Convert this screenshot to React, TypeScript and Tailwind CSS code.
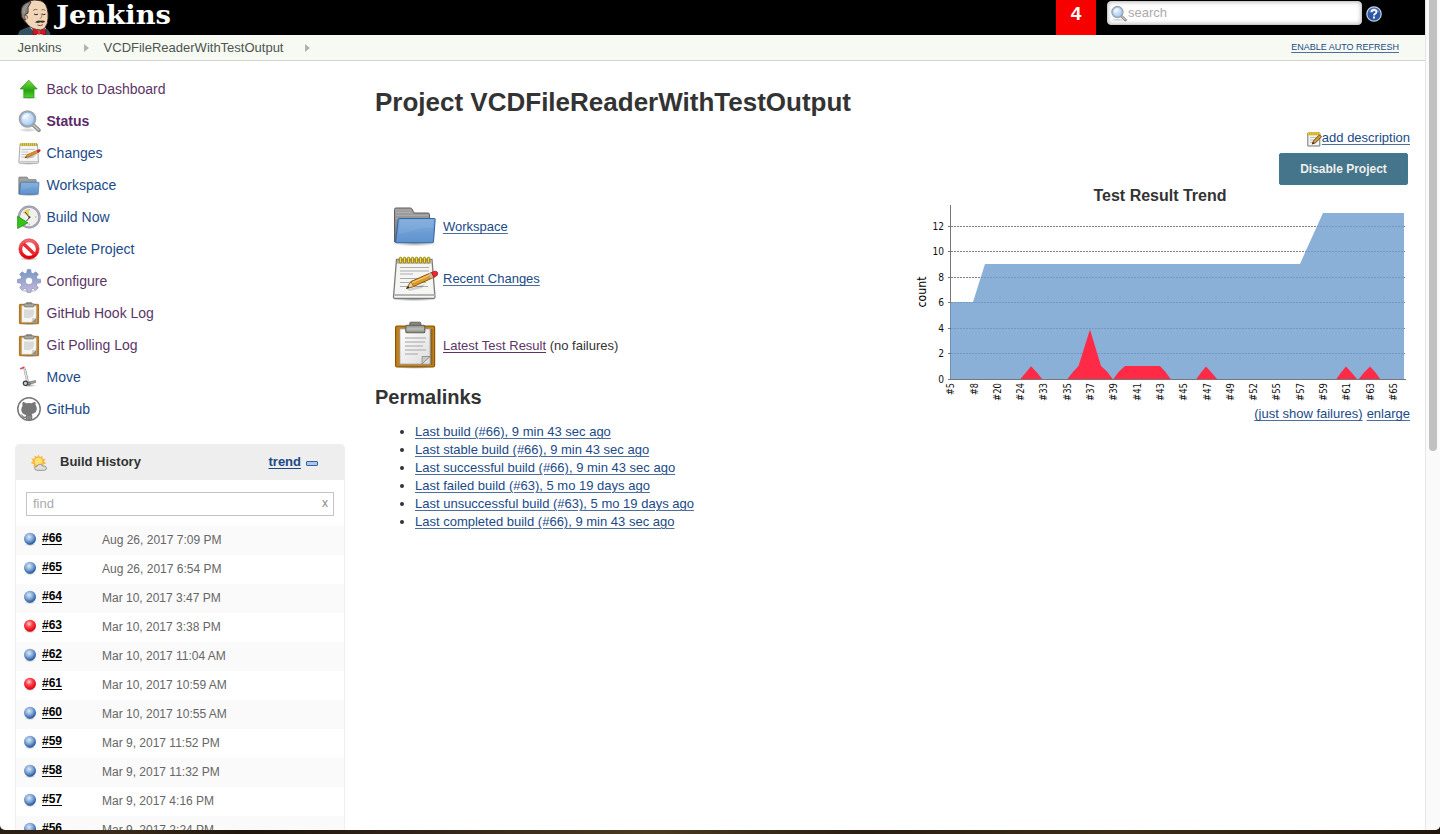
import type { ReactNode } from "react";

type IconProps = { size?: number };

function Defs() {
  return (
    <svg width="0" height="0" className="absolute" aria-hidden="true">
      <defs>
        <linearGradient id="green" x1="0" y1="0" x2="0" y2="1">
          <stop offset="0" stopColor="#7be04a" />
          <stop offset="0.6" stopColor="#27a312" />
          <stop offset="1" stopColor="#4fd42c" />
        </linearGradient>
        <radialGradient id="lens" cx="0.4" cy="0.35" r="0.7">
          <stop offset="0" stopColor="#eef6fe" />
          <stop offset="1" stopColor="#9cc2ea" />
        </radialGradient>
        <linearGradient id="folderFront" x1="0" y1="0" x2="0" y2="1">
          <stop offset="0" stopColor="#7dabdb" />
          <stop offset="1" stopColor="#5f93cf" />
        </linearGradient>
        <linearGradient id="folderBack" x1="0" y1="0" x2="0" y2="1">
          <stop offset="0" stopColor="#a5a5a5" />
          <stop offset="1" stopColor="#707070" />
        </linearGradient>
        <linearGradient id="paper" x1="0" y1="0" x2="1" y2="1">
          <stop offset="0" stopColor="#ffffff" />
          <stop offset="1" stopColor="#dcdcdc" />
        </linearGradient>
        <linearGradient id="clip" x1="0" y1="0" x2="0" y2="1">
          <stop offset="0" stopColor="#8d8f88" />
          <stop offset="0.5" stopColor="#bcbeb6" />
          <stop offset="1" stopColor="#84867e" />
        </linearGradient>
        <linearGradient id="gear" x1="0" y1="0" x2="0" y2="1">
          <stop offset="0" stopColor="#7596c6" />
          <stop offset="0.5" stopColor="#9ea6cf" />
          <stop offset="1" stopColor="#c6bbdf" />
        </linearGradient>
        <linearGradient id="red" x1="0" y1="0" x2="0" y2="1">
          <stop offset="0" stopColor="#f4646c" />
          <stop offset="1" stopColor="#e40008" />
        </linearGradient>
        <radialGradient id="ballBlue" cx="0.42" cy="0.36" r="0.62">
          <stop offset="0" stopColor="#dfeaf5" />
          <stop offset="0.5" stopColor="#86abd8" />
          <stop offset="1" stopColor="#2558a2" />
        </radialGradient>
        <radialGradient id="ballRed" cx="0.42" cy="0.34" r="0.62">
          <stop offset="0" stopColor="#ffd0d2" />
          <stop offset="0.45" stopColor="#fa4550" />
          <stop offset="1" stopColor="#e4000e" />
        </radialGradient>
        <radialGradient id="shadow">
          <stop offset="0" stopColor="#000" stopOpacity="0.35" />
          <stop offset="1" stopColor="#000" stopOpacity="0" />
        </radialGradient>
      </defs>
    </svg>
  );
}

function ArrowUp() {
  return (
    <svg width="24" height="24" viewBox="0 0 24 24">
      <ellipse cx="12" cy="20.8" rx="9" ry="1.8" fill="url(#shadow)" />
      <path d="M11.8 3.2 20.2 12H17v8.5H6.8V12H3.2Z" fill="url(#green)" stroke="#2f9c1b" strokeWidth="0.8" strokeLinejoin="round" />
    </svg>
  );
}

function Magnifier({ size = 24 }: IconProps) {
  return (
    <svg width={size} height={size} viewBox="0 0 24 24" className="shrink-0">
      <ellipse cx="11" cy="21" rx="10" ry="2.2" fill="url(#shadow)" opacity="0.6" />
      <path d="M16.2 15.8 21.8 21.2" stroke="#868686" strokeWidth="3.8" strokeLinecap="round" />
      <path d="M16.6 16.2 21.6 20.8" stroke="#c4c4c4" strokeWidth="1.7" strokeLinecap="round" />
      <circle cx="10.5" cy="10" r="8" fill="url(#lens)" stroke="#a0a2a4" strokeWidth="1.6" />
      <circle cx="10.5" cy="10" r="6.8" fill="none" stroke="#7fa8d8" strokeWidth="0.9" />
      <path d="M5.5 10c.2-3.4 3-5 6.6-4.6-1.4 2.6-3.6 4-6.6 4.6Z" fill="#fff" opacity="0.6" />
    </svg>
  );
}

function Notepad() {
  return (
    <svg width="48" height="48" viewBox="0 0 48 48" className="shrink-0">
      <ellipse cx="23" cy="45" rx="21" ry="2.5" fill="url(#shadow)" />
      <path d="M5.5 5.5h35.5l3 37.500q0 1.500-1.500 1.500h-38.500q-1.500 0-1.500-1.500Z" fill="#f5f5f3" stroke="#7c7c7a" strokeWidth="1.300" />
      <path d="M3.500 41h40" stroke="#b5b5b3" strokeWidth="1.800" />
      <path d="M6 5.800h34.500v4H6Z" fill="#b4b2a4" />
      <path d="M9 13.500h29M9 17h29M9 20h13M9 24.500h24M9 28.500h26M9 32.500h28" stroke="#a4a4a4" strokeWidth="0.900" />
      {[8.500, 12.500, 16.500, 20.500, 24.500, 28.500, 32.500, 36.500].map((x) => (
        <rect key={x} x={x - 0.2} y="3.2" width="2.400" height="5.800" rx="1.200" fill="#f0dc3c" stroke="#96800a" strokeWidth="1" />
      ))}
      <path d="M16 35.500 34 30l-3 4-12 3Z" fill="#000" opacity="0.150" />
      <path d="M15.500 34.500 20 27.500 40.500 18.500 43.500 23 22.500 32.500Z" fill="#dd9a2c" stroke="#8b5a0e" strokeWidth="1" strokeLinejoin="round" />
      <path d="M21 28.800 41.500 19.800" stroke="#f8ce7c" strokeWidth="1.200" />
      <path d="M15.500 34.500 20 27.500 22.500 32.500Z" fill="#ecd2a0" stroke="#8b5a0e" strokeWidth="0.700" />
      <path d="M15.500 34.500 17.200 31.800 18.300 33.800Z" fill="#222" />
      <path d="M38.500 19.300 41 23.900" stroke="#b9bdb8" strokeWidth="2.200" />
      <path d="M40.500 18.500Q45.500 15.800 46.700 18.800 47.500 21.500 43 23.200Z" fill="#ef2436" stroke="#a61420" strokeWidth="0.800" />
    </svg>
  );
}

function NotepadSmall() {
  return (
    <svg width="24" height="24" viewBox="0 0 24 24">
      <ellipse cx="11.500" cy="22.600" rx="10.500" ry="1.300" fill="url(#shadow)" />
      <path d="M3 3h17.500l1 18.200q0 1-1 1H2.800q-1 0-1-1Z" fill="#f4f4f2" stroke="#a2a2a0" strokeWidth="0.900" />
      <path d="M2.500 20.600h18.500" stroke="#c2c2c0" strokeWidth="1" />
      <path d="M4.500 8.500h13M4.500 11h7M4.500 13.500h10M4.500 16h12" stroke="#c0c0c0" strokeWidth="0.900" />
      <path d="M3.500 3.500h16.500" stroke="#a39a50" strokeWidth="2.800" />
      <path d="M4 3.400h16" stroke="#e2cd3e" strokeWidth="2.600" strokeDasharray="1.200 0.800" />
      <path d="M9 17 20 12.500l-2 2.800-8 3Z" fill="#000" opacity="0.150" />
      <path d="M8 16.800 10.200 13.700 20.500 9.200 21.600 11.200 11.600 15.900Z" fill="#dd922e" stroke="#a5671a" strokeWidth="0.700" />
      <path d="M8 16.800 9 15.300 9.800 16.300Z" fill="#333" />
      <path d="M20.200 9.300 22.800 8.500q1 .9.100 2l-1.900 1Z" fill="#d92a2e" stroke="#9c1a1c" strokeWidth="0.500" />
    </svg>
  );
}

function Folder({ size = 24 }: IconProps) {
  return (
    <svg width={size} height={size} viewBox={size === 24 ? "0 -2 48 48" : "0 0 48 48"} className="shrink-0">
      <ellipse cx="24" cy="41.500" rx="23" ry="3" fill="url(#shadow)" />
      <path d="M3.500 40V7.500q0-1.500 1.500-1.500h14.500q1 0 1.500 1l2 4h14q1.500 0 1.500 1.500V40Z" fill="url(#folderBack)" stroke="#5c5c5c" strokeWidth="1" />
      <path d="M5 10.500h16M5 13.500h32M5 16.500h32" stroke="#bdbdbd" strokeWidth="0.700" opacity="0.700" />
      <path d="M8.500 16.500H43q1.200 0 1.100 1.200L42.500 39.500q-.2 1.200-1.500 1.200H5.800q-1.300 0-1.100-1.300L7.200 17.600q.1-1.100 1.300-1.100Z" fill="url(#folderFront)" stroke="#3465a4" strokeWidth="1.100" />
      <path d="M9 18h33.500l-.6 8C28 24 20 31 7.800 31.500Z" fill="#fff" opacity="0.080" />
    </svg>
  );
}

function Clipboard() {
  return (
    <svg width="48" height="48" viewBox="0 0 48 48" className="shrink-0">
      <ellipse cx="24" cy="46" rx="19" ry="2" fill="url(#shadow)" />
      <rect x="4.600" y="5.200" width="39" height="40.600" rx="1.200" fill="#c47f16" stroke="#8a5505" strokeWidth="1.200" />
      <path d="M40.500 8v36" stroke="#8c6420" strokeWidth="2" />
      <path d="M8.800 7.800h30.400v35.400H8.800Z" fill="url(#paper)" stroke="#8f8f8c" strokeWidth="0.900" />
      <path d="M14 17h21M14 21h20M14 25h18M14 29h21M14 33h13" stroke="#bdbdbd" strokeWidth="1.700" />
      <path d="M39 35.500h-8v7.500Z" fill="#8e8e8c" />
      <path d="M31 35.500h8l-8 7.500Z" fill="#c8c8c6" stroke="#777" strokeWidth="0.600" />
      <rect x="18.800" y="1.200" width="11" height="5" rx="1" fill="#858780" stroke="#5c5e58" strokeWidth="0.900" />
      <rect x="14.800" y="4.300" width="19" height="7.400" rx="1.300" fill="url(#clip)" stroke="#5f615a" strokeWidth="1.100" />
    </svg>
  );
}

function ClipboardSmall() {
  return (
    <svg width="24" height="24" viewBox="0 0 24 24">
      <ellipse cx="12" cy="23.100" rx="9.500" ry="1" fill="url(#shadow)" />
      <rect x="2.400" y="3.300" width="19.200" height="19.400" rx="0.600" fill="#c4831f" stroke="#9a6210" strokeWidth="0.800" />
      <path d="M4.600 4.600h14.800v16.800H4.600Z" fill="#f6f6f5" stroke="#aaa79c" strokeWidth="0.600" />
      <path d="M7 8.500h10v4l-1 3-3 1.500H7Z" fill="#dadad9" />
      <path d="M19.400 16.500v4.900h-5.200Z" fill="#8e8e8c" />
      <path d="M15 17h4.200l-4.500 4Z" fill="#cfcfcd" />
      <rect x="9" y="1.300" width="6" height="2.400" rx="0.600" fill="#7f827b" />
      <rect x="7.300" y="2.700" width="9.600" height="3.300" rx="0.700" fill="#a3a69d" stroke="#75786f" strokeWidth="0.700" />
    </svg>
  );
}

function BuildClock() {
  return (
    <svg width="24" height="24" viewBox="0 0 24 24">
      <circle cx="12.200" cy="12" r="10.300" fill="#f1f1ec" stroke="#8e8ea6" strokeWidth="2.200" />
      <circle cx="12.200" cy="12" r="10.300" fill="none" stroke="#c4c4d4" strokeWidth="0.700" />
      <path d="M12.500 12 5.500 7.500Q8 4.500 11.500 4Z" fill="#e6cf64" />
      <path d="M12.500 12.500 8 7M12.500 12.500l-3 3.500" stroke="#444" strokeWidth="1" />
      <circle cx="12.500" cy="12.200" r="1" fill="#333" />
      <path d="M18 12h1.500M12.200 4v1.500M12.200 18.500V20" stroke="#999" strokeWidth="0.900" />
      <path d="M.6 11.300 11 17.800.6 23.600Z" fill="#35c412" stroke="#17860a" strokeWidth="0.700" strokeLinejoin="round" />
    </svg>
  );
}

function Prohibit() {
  return (
    <svg width="24" height="24" viewBox="0 0 24 24">
      <ellipse cx="12" cy="21.800" rx="10" ry="1.800" fill="url(#shadow)" />
      <circle cx="12" cy="12" r="8.500" fill="#fff" stroke="url(#red)" strokeWidth="3.300" />
      <path d="M6.500 6.800 17.500 17.200" stroke="#ec2a34" strokeWidth="3.400" />
      <circle cx="12" cy="12" r="10.200" fill="none" stroke="#d0202a" strokeWidth="0.500" />
    </svg>
  );
}

function Gear() {
  return (
    <svg width="24" height="24" viewBox="0 0 24 24">
      <ellipse cx="12" cy="21.800" rx="9" ry="1.800" fill="url(#shadow)" />
      <path
        fill="url(#gear)"
        stroke="#7d8db5"
        strokeWidth="0.700"
        strokeLinejoin="round"
        fillRule="evenodd"
        d="M10.300.6h3.400l.5 3.400 1.900.8 2.700-2 2.500 2.500-2 2.700.8 1.900 3.400.5v3.300l-3.400.5-.8 1.900 2 2.700-2.500 2.500-2.700-2-1.900.8-.5 3.400h-3.400l-.5-3.400-1.900-.8-2.700 2-2.500-2.500 2-2.700-.8-1.900-3.400-.5v-3.300l3.400-.5.8-1.900-2-2.700 2.500-2.500 2.700 2 1.900-.8ZM12 8.200a3.800 3.800 0 1 0 0 7.600 3.800 3.800 0 0 0 0-7.600Z"
      />
    </svg>
  );
}

function Dolly() {
  return (
    <svg width="24" height="24" viewBox="0 0 24 24">
      <ellipse cx="12" cy="20.500" rx="8" ry="1.600" fill="url(#shadow)" />
      <path d="M6.800 3.200 9.800 17M8.300 3.500l3 13" stroke="#8c8c8c" strokeWidth="1" />
      <path d="M7.600 4.500 10.500 16.500" stroke="#e6e6e6" strokeWidth="1.200" />
      <path d="M3.800 3.700 7 2.200" stroke="#d84a4a" strokeWidth="1.500" strokeLinecap="round" />
      <path d="M9.500 17.500 18.500 15.600v1.900l-7.500 2.200Z" fill="#aaa" stroke="#555" strokeWidth="0.600" />
      <circle cx="8.500" cy="18.300" r="2.200" fill="#ccc" stroke="#3c3c3c" strokeWidth="1.200" />
      <circle cx="12" cy="18.800" r="1.200" fill="#bbb" stroke="#444" strokeWidth="0.800" />
    </svg>
  );
}

function Octocat() {
  return (
    <svg width="24" height="24" viewBox="0 0 24 24">
      <circle cx="12" cy="12" r="11.200" fill="#fff" stroke="#777" strokeWidth="1.500" />
      <path
        fill="#777"
        d="M5.700 5.100c1.100-.2 2.500.5 3.500 1.200a11.500 11.500 0 0 1 5.600 0c1-.7 2.400-1.400 3.500-1.200.5 1.200.4 2.300.2 3 .9 1 1.300 2.200 1.300 3.500 0 4-2.600 5-5.200 5.300.5.500.7 1.200.7 2.200v3.900a11.300 11.300 0 0 1-6.600 0v-2.100c-2.600.6-3.300-.8-3.800-1.900-.3-.6-.8-1-1.200-1.300.9-.4 1.800.1 2.300 1 .7 1 1.500 1.200 2.700.9.100-.8.300-1.300.7-1.700-2.600-.3-5.100-1.300-5.100-5.300 0-1.300.4-2.500 1.200-3.500-.2-.7-.3-1.800.2-4Z"
      />
      <path d="M10.800 19v3.500M13.200 19v3.500" stroke="#b5b5b5" strokeWidth="0.600" />
    </svg>
  );
}

function Weather() {
  return (
    <svg width="18" height="18" viewBox="0 0 18 18" className="relative top-px -left-px">
      <path
        d="m8.500.6 1.300 2.700 2.700-1.600-.1 3 3.300.2-1.800 2.600 2.600 1.900-3.300 1 .8 3-3-.6-2.500 2.200-1.900-2.500-3 .8.300-3-3.300-1.200L3 7.300 1.400 4.600l3.200-.1.100-3L7.400 3Z"
        fill="#f9b848"
      />
      <circle cx="8.500" cy="7.500" r="4.300" fill="#fde36c" stroke="#f4a836" strokeWidth="0.700" />
      <path d="M7 16.300q-2.500-.2-2.400-2.300.3-1.900 2.500-1.800.8-2.200 3.100-2 1.800.2 2.300 1.900 3.900-.7 4.100 2-.1 2.100-2.300 2.200Z" fill="#dededb" stroke="#8d8d8b" strokeWidth="0.900" />
    </svg>
  );
}

function Butler() {
  return (
    <svg width="34" height="35" viewBox="0 0 34 35">
      <path d="M1 35Q1.500 30.500 5 29.500L11 27 28 28Q32.500 29.500 33.500 35Z" fill="#335061" />
      <path d="M12.500 27 20 35h6l3-7-4-2Z" fill="#f4f4f2" />
      <path d="M10.500 3Q14-.8 20 .2 28 .5 30 8 31.600 13 31 18.500 31 24 27.500 28.500 24 31 19.500 29.500 13 28.500 9 22.500 6 20.500 5.500 16 3.500 9 10.500 3Z" fill="#f0d6b7" stroke="#2c2320" strokeWidth="0.900" />
      <path d="M12.500 1.500Q3.500 4 4 12.500 4 17 6.200 19.500L8.800 20 8.200 14.500 11 13Q9.500 7.500 14 2Z" fill="#85837f" stroke="#2c2320" strokeWidth="0.900" />
      <path d="M5.800 12Q6.500 6.500 11 4M6.800 14Q7.500 8.500 10.500 6" stroke="#aaa7a3" strokeWidth="0.700" fill="none" />
      <path d="M8.500 19.800Q6.500 15.500 8.800 15q2 .2 1.700 3.500" fill="#e3b894" stroke="#5b4433" strokeWidth="0.700" />
      <path d="M16 10.500q2-2 4.500-.8M24.500 10q2.500-1.200 4 .5" stroke="#6b5443" strokeWidth="0.800" fill="none" />
      <path d="M17 14q1.800 1.500 4 .1M25 14q1.800 1.200 3.500.1" stroke="#2c2320" strokeWidth="1" fill="none" />
      <path d="M24 13.500q2 4.500-1.200 4.800" stroke="#a07b5c" strokeWidth="0.900" fill="none" />
      <path d="M18 22.300q2.500-2.800 5.500-1.500 2.500-1 4.800.8-2.300 2-4.600.7-3 1.500-5.700 0Z" fill="#3f3733" />
      <path d="M20.500 25q3 1.600 5.500-.4" stroke="#7b3b32" strokeWidth="0.900" fill="none" />
      <path d="M15.800 28.700 22 31.300l6.600-2.300.2 6L22 33.500 16.200 35Z" fill="#d8161f" stroke="#7a0b10" strokeWidth="0.600" />
      <rect x="20.500" y="30.400" width="3.200" height="3.800" rx="0.800" fill="#f0353c" stroke="#7a0b10" strokeWidth="0.400" />
    </svg>
  );
}

function Help() {
  return (
    <svg width="16" height="16" viewBox="0 0 16 16" className="mt-[6px] ml-1">
      <circle cx="8" cy="8" r="7.200" fill="#2c57a4" stroke="#c9d7ee" strokeWidth="1.200" />
      <path d="M2.500 6.500Q4 2 8 2t5.500 4.500Q8 5 2.500 6.500Z" fill="#fff" opacity="0.250" />
      <path d="M5.500 6.300q0-2.500 2.500-2.500t2.400 2.200q0 1-1.300 1.700-1.100.6-1.100 1.700" fill="none" stroke="#fff" strokeWidth="1.800" />
      <rect x="7" y="10.500" width="2" height="2" fill="#fff" />
    </svg>
  );
}

function MiniNote() {
  return (
    <svg width="15" height="16" viewBox="0 0 15 16" className="mt-[2px] shrink-0">
      <path d="M.8 2h12v13H.8Z" fill="#f3f3f0" stroke="#77776f" strokeWidth="1" />
      <path d="M3 6.500h7M3 9h5M3 11.500h4" stroke="#b9b9b5" strokeWidth="0.900" />
      <path d="M1 2.700h11.600" stroke="#c09b10" strokeWidth="3" />
      <path d="M1.200 2.500h11.600" stroke="#f5e050" strokeWidth="2.400" strokeDasharray="1.100 1" />
      <path d="M5.300 13 6.500 9.800 12.500 3.800 14.500 5.800 8.500 11.800Z" fill="#d99a3a" stroke="#5c3c0a" strokeWidth="0.900" />
      <path d="M5.300 13l.7-1.900 1.300 1.200Z" fill="#222" />
    </svg>
  );
}

function Ball({ failed }: { failed: boolean }) {
  return (
    <svg width="14" height="14" viewBox="0 0 14 14">
      <ellipse cx="7" cy="12.600" rx="5.500" ry="1.400" fill="url(#shadow)" />
      <circle cx="7" cy="6.700" r="6" fill={failed ? "url(#ballRed)" : "url(#ballBlue)"} />
    </svg>
  );
}

const tasks: { label: string; icon: ReactNode; tone: string }[] = [
  { label: "Back to Dashboard", icon: <ArrowUp />, tone: "text-[#5c3566]" },
  { label: "Status", icon: <Magnifier />, tone: "font-bold text-[#5c2a66]" },
  { label: "Changes", icon: <NotepadSmall />, tone: "text-[#204a87]" },
  { label: "Workspace", icon: <Folder />, tone: "text-[#204a87]" },
  { label: "Build Now", icon: <BuildClock />, tone: "text-[#204a87]" },
  { label: "Delete Project", icon: <Prohibit />, tone: "text-[#204a87]" },
  { label: "Configure", icon: <Gear />, tone: "text-[#5c3566]" },
  { label: "GitHub Hook Log", icon: <ClipboardSmall />, tone: "text-[#5c3566]" },
  { label: "Git Polling Log", icon: <ClipboardSmall />, tone: "text-[#5c3566]" },
  { label: "Move", icon: <Dolly />, tone: "text-[#204a87]" },
  { label: "GitHub", icon: <Octocat />, tone: "text-[#204a87]" },
];

const builds: [number, string][] = [
  [66, "Aug 26, 2017 7:09 PM"],
  [65, "Aug 26, 2017 6:54 PM"],
  [64, "Mar 10, 2017 3:47 PM"],
  [63, "Mar 10, 2017 3:38 PM"],
  [62, "Mar 10, 2017 11:04 AM"],
  [61, "Mar 10, 2017 10:59 AM"],
  [60, "Mar 10, 2017 10:55 AM"],
  [59, "Mar 9, 2017 11:52 PM"],
  [58, "Mar 9, 2017 11:32 PM"],
  [57, "Mar 9, 2017 4:16 PM"],
  [56, "Mar 9, 2017 2:24 PM"],
];

const permalinks = [
  "Last build (#66), 9 min 43 sec ago",
  "Last stable build (#66), 9 min 43 sec ago",
  "Last successful build (#66), 9 min 43 sec ago",
  "Last failed build (#63), 5 mo 19 days ago",
  "Last unsuccessful build (#63), 5 mo 19 days ago",
  "Last completed build (#66), 9 min 43 sec ago",
];

const xLabels = [5, 8, 20, 24, 33, 35, 37, 39, 41, 43, 45, 47, 49, 52, 55, 57, 59, 61, 63, 65];
const yTicks: [number, number][] = [
  [12, 22.5],
  [10, 47.5],
  [8, 73.5],
  [6, 98.5],
  [4, 124.5],
  [2, 149.5],
  [0, 175.5],
];

function TrendChart() {
  return (
    <svg width="500" height="200" viewBox="0 0 500 200" className="block" fontFamily='"DejaVu Sans", sans-serif'>
      {yTicks.slice(0, 6).map(([v, y]) => (
        <path key={v} d={`M41 ${y}H495`} stroke="#808080" strokeDasharray="2 1" />
      ))}
      <path d="M40 175.5V98H63L75 60H390L395.5 47.5 413 9H494V175.5Z" fill="#729fcf" fillOpacity="0.82" />
      <g fill="#ff2b46">
        <path d="M110 175.5 115.5 169 121 162.3 127 168.5 132.5 175.5Z" />
        <path d="M157 175.5 162.5 168.5 168.5 162 180 125.5 191 162 197.5 168 203 175.5 208.500 168 215 162H250L255.500 168 261 175.500Z" />
        <path d="M286 175.500 291 168.500 296 162.500 301.500 168.500 307.500 175.500Z" />
        <path d="M426 175.500 431 168.500 436 162.500 441.500 168.500 447.500 175.500Z" />
        <path d="M448.500 175.500 454 168.500 460 162.500 465.500 168.500 470.500 175.500Z" />
      </g>
      <path d="M40.500 1V98" stroke="#777" />
      <path d="M40.500 98V175.500" stroke="#6f8fb8" />
      <path d="M38 175.500H496" stroke="#777" />
      {yTicks.map(([v, y]) => (
        <g key={v}>
          <path d={`M38 ${y}H41`} stroke="#777" />
          <text x="34" y={y + 3.5} textAnchor="end" fontSize="10.5" textLength={v > 9 ? 11.5 : 5.8} lengthAdjust="spacingAndGlyphs" fill="#111">
            {v}
          </text>
        </g>
      ))}
      {xLabels.map((n, i) => (
        <text
          key={n}
          transform={`translate(${44.2 + i * 23.3} 179) rotate(-90)`}
          textAnchor="end"
          fontSize="10"
          textLength={n > 9 ? 18 : 12}
          lengthAdjust="spacingAndGlyphs"
          fill="#111"
        >
          {`#${n}`}
        </text>
      ))}
      <text transform="translate(15.5 103.5) rotate(-90)" fontSize="11.5" textLength="31" lengthAdjust="spacingAndGlyphs" fill="#000">
        count
      </text>
    </svg>
  );
}

const link = "text-[#204a87] underline decoration-[#4d6ea0] decoration-1 underline-offset-2";

function TopBar() {
  return (
    <header className="flex h-[35px] shrink-0 bg-black pl-[17px]">
      <Butler />
      <svg width="130" height="35" viewBox="0 0 130 35" className="overflow-visible">
        <text x="5" y="23.5" fontFamily='"DejaVu Serif", serif' fontWeight="700" fontSize="26.5" textLength="115" lengthAdjust="spacingAndGlyphs" fill="#fff">
          Jenkins
        </text>
      </svg>
      <div className="ml-auto flex w-[369px]">
        <div className="flex h-[35px] w-10 items-start justify-center bg-[#f70000] pt-[2px] text-[19px] leading-[23px] font-bold text-white">4</div>
        <div className="mt-px ml-[11px] flex h-6 w-[255px] items-center rounded-[4px] border border-[#ccc] bg-white pl-0.5 text-[13px] text-[#aaa] shadow-[inset_0_0_4px_rgba(0,0,0,0.3)]">
          <Magnifier size={17} />
          <span className="ml-[1px]">search</span>
        </div>
        <Help />
      </div>
    </header>
  );
}

function Crumbs() {
  return (
    <nav className="flex h-[26px] shrink-0 items-center border-b border-[#d0d6cc] bg-[#f6faf2] pl-[17.5px] text-[13px] text-[#4d5550]">
      <span>Jenkins</span>
      <i className="ml-[22px] h-0 w-0 border-y-[4px] border-l-[5px] border-y-transparent border-l-[#b0b4ad]" />
      <span className="ml-[15px]">VCDFileReaderWithTestOutput</span>
      <i className="ml-[22px] h-0 w-0 border-y-[4px] border-l-[5px] border-y-transparent border-l-[#b0b4ad]" />
      <a className="mr-[26px] ml-auto text-[9px] text-[#204a87] underline decoration-[#4d6ea0] underline-offset-2">ENABLE AUTO REFRESH</a>
    </nav>
  );
}

function BuildHistory() {
  return (
    <section className="mt-[19px] ml-[15px] w-[330px] rounded-t-[5px] border-x border-[#eee]">
      <div className="-mx-px flex h-9 items-center rounded-t-[5px] bg-[#eee] pl-4 text-[13px] font-bold">
        <Weather />
        <span className="ml-[11px] text-[#333]">Build History</span>
        <a className="ml-auto text-[#204a87] underline underline-offset-2">trend</a>
        <i className="mt-[2px] mr-[27px] ml-[5px] h-[5px] w-3 rounded-[1px] border border-[#3465a4] bg-[#a9c8ea]" />
      </div>
      <div className="mx-[10px] mt-3 mb-[10px] flex h-6 justify-between border border-[#c4c4c4] px-[6px] text-[13px] leading-[22px] text-[#aaa]">
        <span>find</span>
        <span className="mt-[-1px] mr-[-1px] text-[12px] text-[#888]">x</span>
      </div>
      <div>
        {builds.map(([n, date]) => (
          <div key={n} className="flex h-[29px] items-start pl-[7px] text-[12px] leading-4 odd:bg-[#fafafa]">
            <span className="mt-[6px]">
              <Ball failed={n === 63 || n === 61} />
            </span>
            <a className="mt-1 ml-[5px] w-[60px] font-bold text-black underline underline-offset-2">#{n}</a>
            <span className="mt-[6px] text-[#666]">{date}</span>
          </div>
        ))}
      </div>
    </section>
  );
}

export default function App() {
  return (
    <div className="flex h-[834px] w-[1440px] flex-col overflow-hidden bg-[linear-gradient(90deg,#2a1d12,#3a2a1a_8%,#1f150c_17%,#33241a_30%,#4a3a20_45%,#2a1d12_60%,#3d2d18_78%,#20160d)] font-['Liberation_Sans',Arial,sans-serif] text-[#333]">
      <Defs />
      <div className="flex h-[830px] overflow-hidden rounded-b-[5px] bg-white">
        <div className="flex w-[1425px] flex-col">
          <TopBar />
          <Crumbs />
          <div className="flex">
            <aside className="w-[375px] shrink-0 pt-3">
              <ul className="pl-[17px]">
                {tasks.map((t) => (
                  <li key={t.label} className="flex h-8 items-center gap-[5.5px] text-[14px]">
                    {t.icon}
                    <a className={t.tone}>{t.label}</a>
                  </li>
                ))}
              </ul>
              <BuildHistory />
            </aside>
            <main className="w-[1035px] text-[13px]">
              <h1 className="flex h-[65px] items-end pb-[9px] text-[26px] leading-[30px] font-bold">Project VCDFileReaderWithTestOutput</h1>
              <div className="flex justify-between">
                <div className="pt-[76px]">
                  <div className="flex h-12 items-center gap-1 pl-4">
                    <Folder size={48} />
                    <a className={`mt-0.5 ${link}`}>Workspace</a>
                  </div>
                  <div className="mt-1 flex h-12 items-center gap-1 pl-4">
                    <Notepad />
                    <a className={`mt-0.5 ${link}`}>Recent Changes</a>
                  </div>
                  <div className="mt-[19px] flex h-12 items-center gap-1 pl-4">
                    <Clipboard />
                    <span className="mt-0.5">
                      <a className="text-[#5c3566] underline underline-offset-2">Latest Test Result</a> (no failures)
                    </span>
                  </div>
                  <h2 className="mt-4 text-[20px] leading-6 font-bold">Permalinks</h2>
                  <ul className="mt-[14px] list-disc pl-10 leading-[18px]">
                    {permalinks.map((p) => (
                      <li key={p}>
                        <a className={link}>{p}</a>
                      </li>
                    ))}
                  </ul>
                </div>
                <div className="flex w-[500px] flex-col items-end">
                  <div className="flex h-6 items-center">
                    <MiniNote />
                    <a className={link}>add description</a>
                  </div>
                  <button className="mt-[3px] mr-[2px] h-8 w-[129px] rounded-[2px] border border-[#3a7c93] bg-[#44758a] text-[12px] font-bold text-[#eee]">
                    Disable Project
                  </button>
                  <div className="h-[19px] w-full text-center text-[16px] leading-[21px] font-bold">Test Result Trend</div>
                  <TrendChart />
                  <div className="flex h-5 items-center gap-[4px]">
                    <a className={link}>(just show failures)</a>
                    <a className={link}>enlarge</a>
                  </div>
                </div>
              </div>
            </main>
          </div>
        </div>
        <div className="w-[15px] border-l border-[#e6e6e6] bg-[#fafafa] pl-[3px]">
          <div className="h-[451px] w-2 rounded-b-full bg-[#c1c1c1]" />
        </div>
      </div>
    </div>
  );
}
